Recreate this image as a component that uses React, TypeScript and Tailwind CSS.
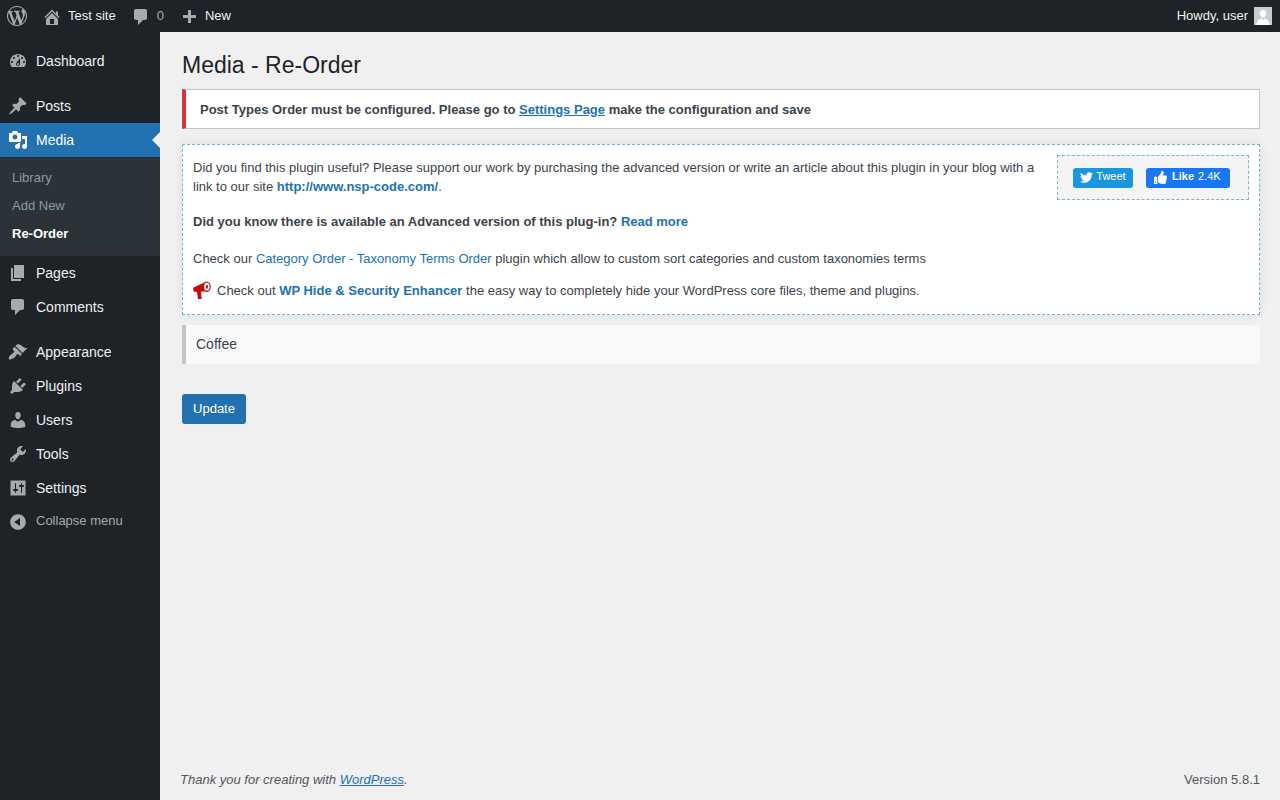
import React from "react";
import { FaTwitter, FaThumbsUp } from "react-icons/fa";

const P = {
  wp: "M20 10c0-5.51-4.49-10-10-10C4.48 0 0 4.49 0 10c0 5.52 4.48 10 10 10 5.51 0 10-4.48 10-10zM7.78 15.37L4.37 6.22c.55-.02 1.17-.08 1.17-.08.5-.06.44-1.13-.06-1.11 0 0-1.45.11-2.37.11-.18 0-.37 0-.58-.01C4.12 2.69 6.87 1.11 10 1.11c2.33 0 4.45.87 6.05 2.34-.68-.11-1.65.39-1.65 1.58 0 .74.45 1.36.9 2.1.35.61.55 1.36.55 2.46 0 1.49-1.4 5-1.4 5l-3.03-8.37c.54-.02.82-.17.82-.17.5-.05.44-1.25-.06-1.22 0 0-1.44.12-2.38.12-.87 0-2.33-.12-2.33-.12-.5-.03-.56 1.2-.06 1.22l.92.08 1.26 3.41zM17.41 10c.24-.64.74-1.87.43-4.25.7 1.29 1.05 2.71 1.05 4.25 0 3.29-1.73 6.24-4.4 7.78.97-2.59 1.94-5.2 2.92-7.78zM6.1 18.09C3.12 16.65 1.11 13.53 1.11 10c0-1.3.23-2.48.72-3.59C3.25 10.3 4.67 14.2 6.1 18.09zm4.03-6.63l2.58 6.98c-.86.29-1.76.45-2.71.45-.79 0-1.57-.11-2.29-.33.81-2.38 1.62-4.74 2.42-7.1z",
  home: "M16 8.5l1.53 1.53-1.06 1.06L10 4.62l-6.47 6.47-1.06-1.06L10 2.5l4 4v-2h2v4zm-6-2.46l6 5.99V18H4v-5.97zM12 17v-5H8v5h4z",
  comment: "M5 2h9c1.1 0 2 .9 2 2v7c0 1.1-.9 2-2 2h-2l-5 5v-5H5c-1.1 0-2-.9-2-2V4c0-1.1.9-2 2-2z",
  plus: "M17 7v3h-5v5H9v-5H4V7h5V2h3v5h5z",
  dashboard: "M3.76 16h12.48c1.1-1.37 1.76-3.11 1.76-5 0-4.42-3.58-8-8-8s-8 3.58-8 8c0 1.89.66 3.63 1.76 5zM10 4c.55 0 1 .45 1 1s-.45 1-1 1-1-.45-1-1 .45-1 1-1zM6 6c.55 0 1 .45 1 1s-.45 1-1 1-1-.45-1-1 .45-1 1-1zm8 0c.55 0 1 .45 1 1s-.45 1-1 1-1-.45-1-1 .45-1 1-1zm-5.37 5.55L12 7v6c0 1.1-.9 2-2 2s-2-.9-2-2c0-.57.24-1.08.63-1.45zM4 10c.55 0 1 .45 1 1s-.45 1-1 1-1-.45-1-1 .45-1 1-1zm12 0c.55 0 1 .45 1 1s-.45 1-1 1-1-.45-1-1 .45-1 1-1zm-5 3c0-.55-.45-1-1-1s-1 .45-1 1 .45 1 1 1 1-.45 1-1z",
  post: "M10.44 3.02l1.82-1.82 6.36 6.35-1.83 1.82c-1.05-.68-2.48-.57-3.41.36l-.75.75c-.92.93-1.04 2.35-.35 3.41l-1.83 1.82-2.41-2.41-2.8 2.79c-.42.42-3.38 2.71-3.8 2.29s1.86-3.39 2.28-3.81l2.79-2.79L4.1 9.36l1.83-1.82c1.05.69 2.48.57 3.4-.36l.75-.75c.93-.92 1.05-2.35.36-3.41z",
  media: "M13 11V4c0-.55-.45-1-1-1h-1.67L9 1H5L3.67 3H2c-.55 0-1 .45-1 1v7c0 .55.45 1 1 1h10c.55 0 1-.45 1-1zM7 4.5c1.38 0 2.5 1.12 2.5 2.5S8.38 9.5 7 9.5 4.5 8.38 4.5 7 5.62 4.5 7 4.5zM14 6h5v10.5c0 1.38-1.12 2.5-2.5 2.5S14 17.88 14 16.5s1.12-2.5 2.5-2.5c.17 0 .34.02.5.05V9h-3V6zm-4 8.05V13h2v3.5c0 1.38-1.12 2.5-2.5 2.5S7 17.88 7 16.5 8.12 14 9.5 14c.17 0 .34.02.5.05z",
  page: "M6 15V2h10v13H6zm-1 1h8v2H3V5h2v11z",
  appearance: "M14.48 11.06L7.41 3.99l1.5-1.5c.5-.56 2.3-.47 3.51.32 1.21.8 1.43 1.28 2.91 2.1 1.18.64 2.45 1.26 4.45.85zm-.71.71L6.7 4.7 4.93 6.47c-.39.39-.39 1.02 0 1.41l1.06 1.06c.39.39.39 1.03 0 1.42-.6.6-1.43 1.11-2.21 1.69-.35.26-.7.53-1.01.84C1.43 13.23.28 16.6 1.01 17.27c.73.67 4.18-.37 5.53-1.72.31-.31.58-.66.85-1.01.58-.78 1.09-1.61 1.69-2.21.39-.39 1.02-.39 1.41 0l1.06 1.06c.39.39 1.02.39 1.41 0z",
  plugins: "M13.11 4.36L9.87 7.6 8 5.73l3.24-3.24c.35-.34 1.05-.2 1.56.32.52.51.66 1.21.31 1.55zm-8 1.77l.91-1.12 9.01 9.01-1.19.84c-.71.71-2.63 1.16-3.82 1.16H6.14L4.9 17.26c-.59.59-1.54.59-2.12 0-.59-.58-.59-1.53 0-2.12l1.24-1.24v-3.88c0-1.13.4-3.19 1.09-3.89zm7.26 3.97l3.24-3.24c.34-.35 1.04-.21 1.55.31.52.51.66 1.21.31 1.55l-3.24 3.25z",
  users: "M10 9.25c-2.27 0-2.73-3.44-2.73-3.44C7 4.02 7.82 2 9.97 2c2.16 0 2.98 2.02 2.71 3.81 0 0-.41 3.44-2.68 3.44zm0 2.57L12.72 10c2.39 0 4.52 2.33 4.52 4.53v2.49s-3.65 1.13-7.24 1.13c-3.65 0-7.24-1.13-7.24-1.13v-2.49c0-2.25 1.94-4.48 4.47-4.48z",
  tools: "M16.68 9.77c-1.34 1.34-3.3 1.67-4.95.99l-5.41 6.52c-.99.99-2.59.99-3.58 0s-.99-2.59 0-3.57l6.52-5.42c-.68-1.65-.35-3.61.99-4.95 1.28-1.28 3.12-1.62 4.72-1.06l-2.89 2.89 2.82 2.82 2.86-2.87c.53 1.58.18 3.39-1.08 4.65zM3.81 16.21c.4.39 1.04.39 1.43 0 .4-.4.4-1.04 0-1.43-.39-.4-1.03-.4-1.43 0-.39.39-.39 1.03 0 1.43z",
  settings: "M17.5 17.5V2.500H2.500v15h15zM8 11h1c.55 0 1 .45 1 1s-.45 1-1 1H8v1.500c0 .28-.22.5-.5.5s-.5-.22-.5-.5V13H6c-.55 0-1-.45-1-1s.45-1 1-1h1V5.500c0-.28.22-.5.5-.5s.5.22.5.5V11zm5-2h-1c-.55 0-1-.45-1-1s.45-1 1-1h1V5.500c0-.28.22-.5.5-.5s.5.22.5.5V7h1c.55 0 1 .45 1 1s-.45 1-1 1h-1v5.500c0 .28-.22.5-.5.5s-.5-.22-.5-.5V9z",
  collapse: "M10 2.16c4.33 0 7.84 3.51 7.84 7.84s-3.51 7.84-7.84 7.84S2.16 14.33 2.16 10 5.71 2.16 10 2.16zm2 11.72V6.12L6.18 9.97z",
};

function Dash({ d, className }: { d: string; className: string }) {
  return (
    <svg viewBox="0 0 20 20" fill="currentColor" fillRule="evenodd" className={className} aria-hidden="true">
      <path d={d} />
    </svg>
  );
}

function MenuItem({ icon, label }: { icon: string; label: string }) {
  return (
    <div className="flex h-[34px] items-center text-[14px] text-[#f0f0f1]">
      <Dash d={icon} className="ml-[8px] h-[20px] w-[20px] text-[#a7aaad]" />
      <span className="ml-[8px]">{label}</span>
    </div>
  );
}

function Sidebar() {
  return (
    <aside className="flex w-[160px] shrink-0 flex-col bg-[#1d2327] pt-[12px]">
      <MenuItem icon={P.dashboard} label="Dashboard" />
      <div className="h-[11px]" />
      <MenuItem icon={P.post} label="Posts" />
      <div className="relative flex h-[34px] items-center bg-[#2271b1] text-[14px] text-white">
        <Dash d={P.media} className="ml-[8px] h-[20px] w-[20px] text-white" />
        <span className="ml-[8px]">Media</span>
        <span className="absolute right-0 top-[9px] h-0 w-0 border-y-[8px] border-r-[8px] border-y-transparent border-r-[#f0f0f0]" />
      </div>
      <div className="flex h-[99px] flex-col bg-[#2c3338] pt-[7px] text-[13px] text-[#c3c4c7b3]">
        <div className="flex h-[28px] items-center pl-[12px]">Library</div>
        <div className="flex h-[28px] items-center pl-[12px]">Add New</div>
        <div className="flex h-[28px] items-center pl-[12px] font-bold text-white">Re-Order</div>
      </div>
      <MenuItem icon={P.page} label="Pages" />
      <MenuItem icon={P.comment} label="Comments" />
      <div className="h-[11px]" />
      <MenuItem icon={P.appearance} label="Appearance" />
      <MenuItem icon={P.plugins} label="Plugins" />
      <MenuItem icon={P.users} label="Users" />
      <MenuItem icon={P.tools} label="Tools" />
      <MenuItem icon={P.settings} label="Settings" />
      <div className="flex h-[34px] items-start pt-[6px] text-[13px] text-[#a7aaad]">
        <Dash d={P.collapse} className="ml-[8px] mt-[1px] h-[20px] w-[20px]" />
        <span className="ml-[8px]">Collapse menu</span>
      </div>
    </aside>
  );
}

function TopBar() {
  return (
    <header className="flex h-[32px] shrink-0 items-center bg-[#1d2327] text-[13px] text-[#f0f0f1]">
      <Dash d={P.wp} className="ml-[7px] h-[20px] w-[20px] text-[#a7aaad]" />
      <Dash d={P.home} className="ml-[15px] mt-[1px] h-[20px] w-[20px] text-[#a7aaad]" />
      <span className="ml-[6px]">Test site</span>
      <Dash d={P.comment} className="ml-[15px] mt-[2px] h-[20px] w-[20px] text-[#a7aaad]" />
      <span className="ml-[6px] text-[#a7aaad]">0</span>
      <Dash d={P.plus} className="ml-[15px] mt-[4px] h-[20px] w-[20px] text-[#a7aaad]" />
      <span className="ml-[6px]">New</span>
      <span className="ml-auto">Howdy, user</span>
      <div className="ml-[6px] mr-[8px] flex h-[18px] w-[18px] items-end justify-center overflow-hidden bg-[#c9cdd1]">
        <svg viewBox="0 0 18 18" className="h-[18px] w-[18px]" fill="#fff" aria-hidden="true">
          <path d="M9 3c2 0 3.2 1.6 3.2 3.500S11 10.600 9 10.600 5.800 8.400 5.800 6.500 7 3 9 3zM2.500 18c0-3.500 2.600-6.100 4.500-6.500l2 1.300 2-1.300c1.900.4 4.500 3 4.500 6.500z" />
        </svg>
      </div>
    </header>
  );
}

function Megaphone() {
  return (
    <svg viewBox="0 0 18 18" className="mr-[6px] inline-block h-[18px] w-[18px] align-[-4px]" aria-hidden="true">
      <path fill="#c90a0a" d="M.4 6.500 11.500 1.500 11.800 10.200 7.800 10.800 8.800 18H5L4 11 1.800 10.700C.7 10.500.2 9.500.2 8.400c0-.6.1-1.300.2-1.900z" />
      <ellipse cx="13.600" cy="5.700" rx="4.200" ry="5.300" fill="#c90a0a" />
      <ellipse cx="13.800" cy="5.700" rx="2.800" ry="3.900" fill="#fff" />
      <ellipse cx="14" cy="5.700" rx="1" ry="2" fill="#c90a0a" />
    </svg>
  );
}

const linkBold = "font-bold text-[#2271b1]";

export default function App() {
  return (
    <div className="flex h-[800px] w-[1280px] flex-col overflow-hidden bg-[#f0f0f0] font-['Liberation_Sans',Arial,sans-serif]">
      <TopBar />
      <div className="flex min-h-0 flex-1">
        <Sidebar />
        <main className="flex min-w-0 flex-1 flex-col pr-[20px] text-[13px] text-[#3c434a]">
          <div className="pl-[22px]">
            <h1 className="mt-[17px] h-[40px] text-[23px] leading-[32px] text-[#1d2327]">Media - Re-Order</h1>
            <div className="flex h-[40px] items-center border border-l-[4px] border-[#c3c4c7] border-l-[#d63638] bg-white pl-[14px] pt-[1px] font-bold">
              <span>
                Post Types Order must be configured. Please go to{" "}
                <a className="text-[#2271b1] underline">Settings Page</a> make the configuration and save
              </span>
            </div>
            <section className="mt-[15px] h-[171px] border border-dashed border-[#6fb3d9] bg-white px-[10px] pt-[10px] shadow-[0_0_10px_rgba(0,0,0,0.08)]">
              <div className="float-right ml-[20px] flex h-[45px] w-[192px] items-center gap-[13px] border border-dashed border-[#7fb2cf] bg-[#f4f4f4] pl-[15px]">
                <div className="flex h-[20px] w-[60px] items-center justify-center gap-[3px] rounded-[3px] bg-[#1b95e0] pb-[2px] text-[11px] text-white">
                  <FaTwitter className="mt-[2px] h-[13px] w-[13px]" />
                  <span>Tweet</span>
                </div>
                <div className="flex h-[20px] w-[84px] items-center gap-[4px] rounded-[3px] bg-[#1877f2] pb-[2px] pl-[8px] text-[11px] text-white">
                  <FaThumbsUp className="mt-[2px] h-[13px] w-[13px]" />
                  <b className="ml-[1px]">Like</b>
                  <span>2.4K</span>
                </div>
              </div>
              <p className="mt-[3px] leading-[19px]">
                Did you find this plugin useful? Please support our work by purchasing the advanced version or write an article about this plugin in your blog with a link to our site{" "}
                <a className={linkBold}>http://www.nsp-code.com/</a>.
              </p>
              <p className="mt-[16px] leading-[19px]">
                <b>Did you know there is available an Advanced version of this plug-in?</b>{" "}
                <a className={linkBold}>Read more</a>
              </p>
              <p className="mt-[18px] leading-[19px]">
                Check our <a className="text-[#2271b1]">Category Order - Taxonomy Terms Order</a> plugin which allow to custom sort categories and custom taxonomies terms
              </p>
              <p className="mt-[13px] leading-[19px]">
                <Megaphone />
                Check out <a className={linkBold}>WP Hide &amp; Security Enhancer</a> the easy way to completely hide your WordPress core files, theme and plugins.
              </p>
            </section>
            <div className="mt-[10px] flex h-[39px] items-center border-l-[4px] border-[#c3c4c7] bg-[#f9f9f9] pl-[10px] text-[14px]">Coffee</div>
            <button className="mt-[30px] h-[30px] w-[64px] rounded-[3px] bg-[#2271b1] text-center text-[13px] text-white">Update</button>
          </div>
          <footer className="mt-auto flex h-[42px] items-start justify-between pl-[20px] pt-[12px] text-[#50575e]">
            <span className="italic">
              Thank you for creating with <a className="text-[#2271b1] underline">WordPress</a>.
            </span>
            <span>Version 5.8.1</span>
          </footer>
        </main>
      </div>
    </div>
  );
}
